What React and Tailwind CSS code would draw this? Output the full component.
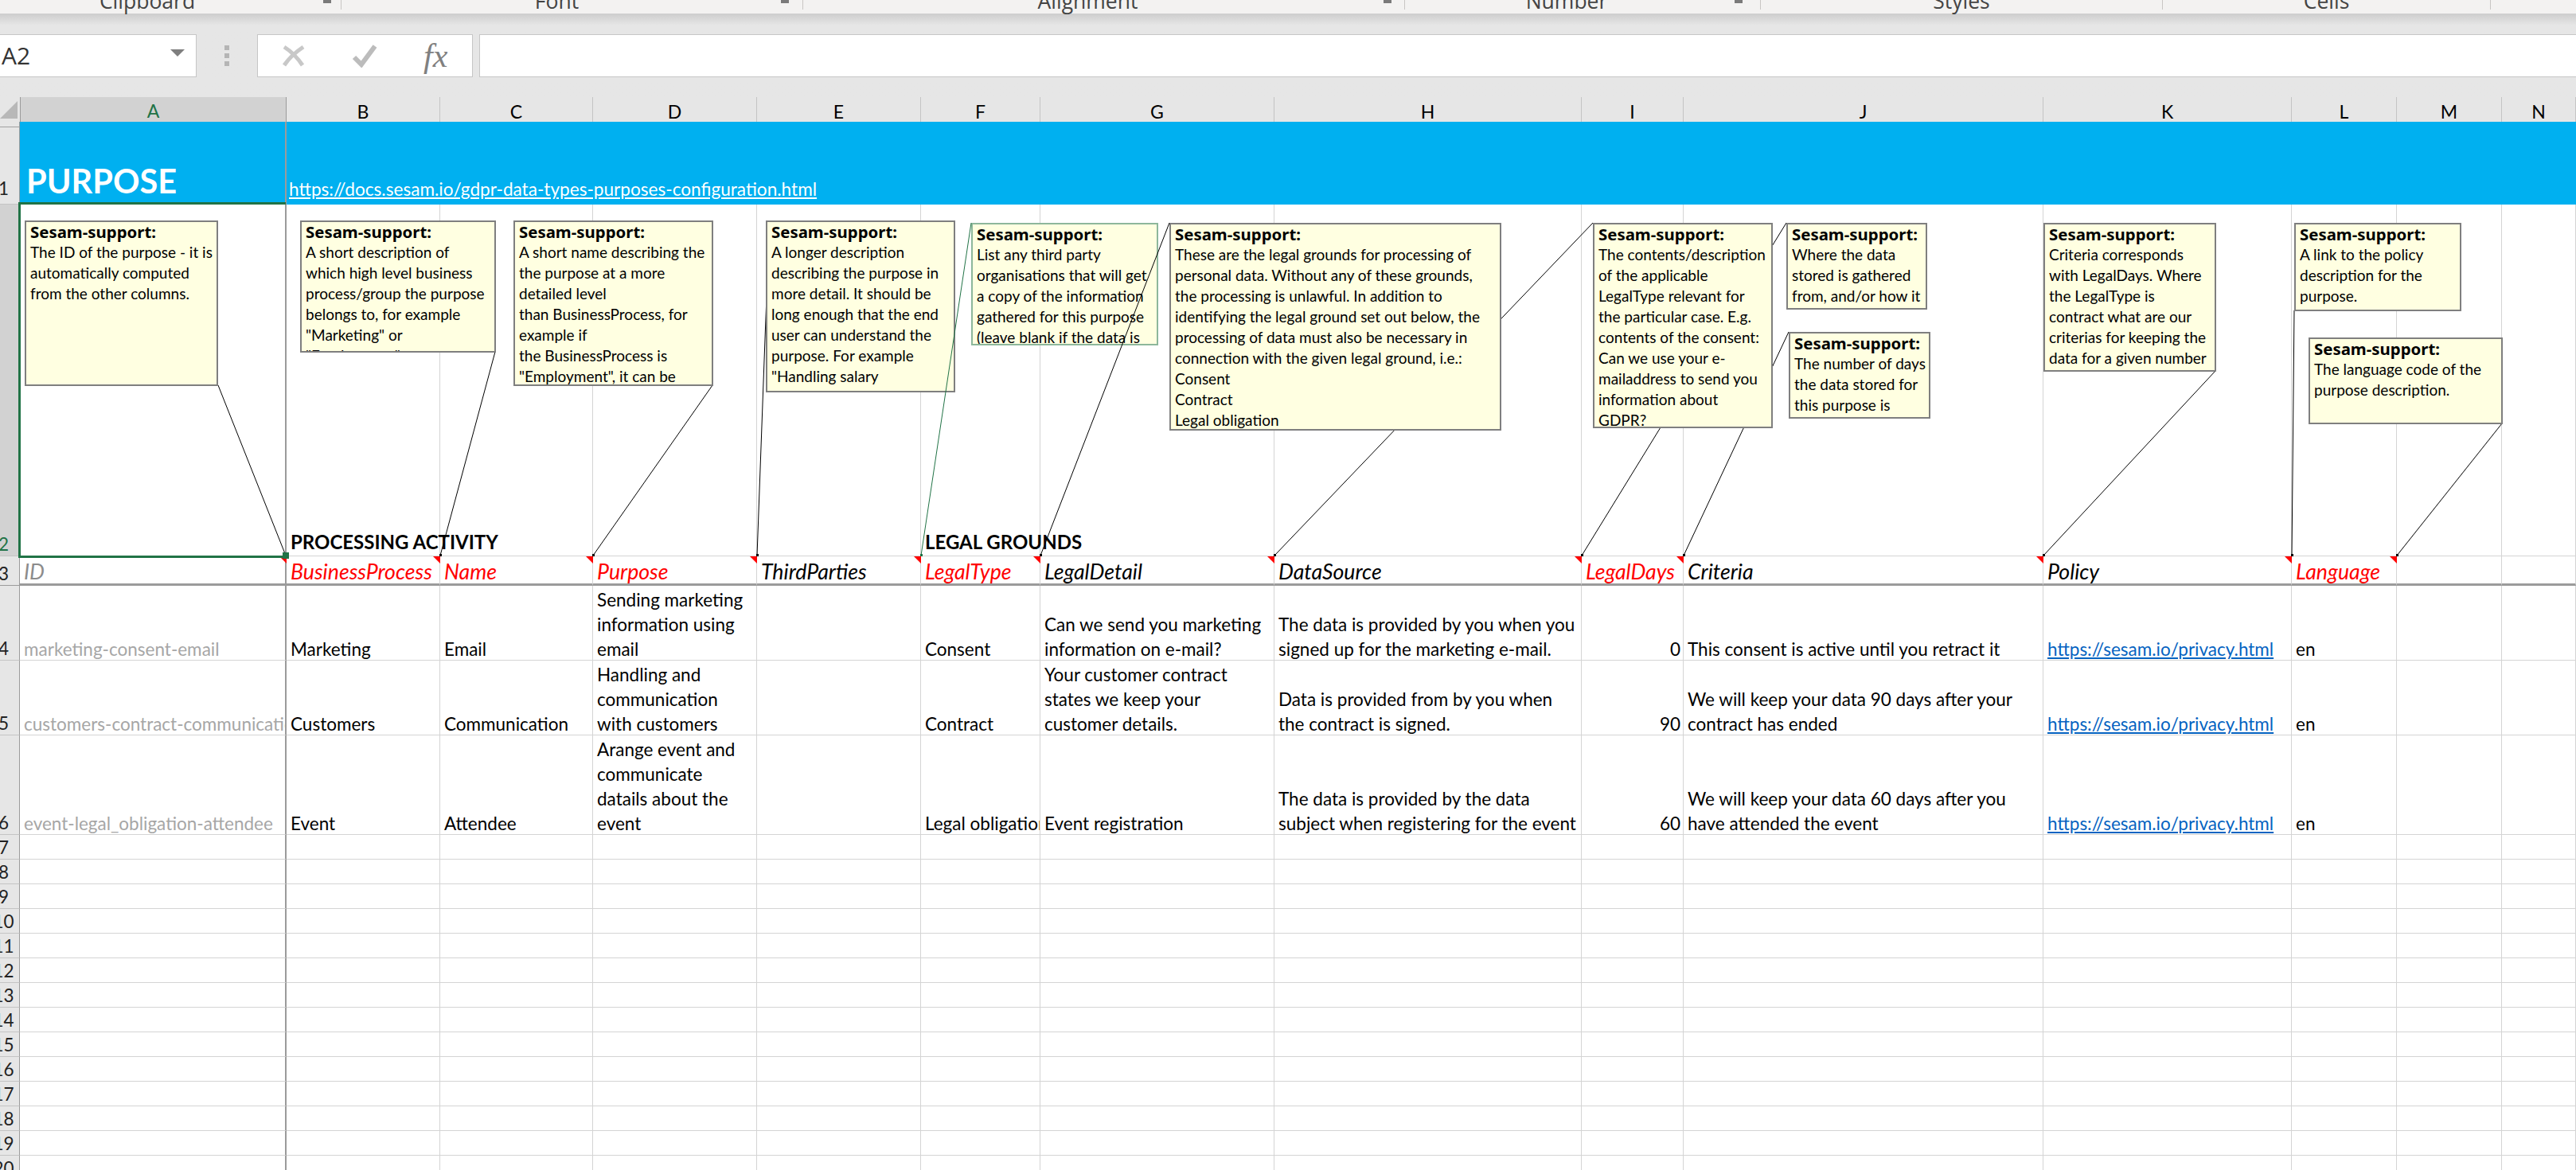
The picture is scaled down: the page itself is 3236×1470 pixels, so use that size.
const COLS = "grid grid-cols-[25px_335px_193px_192px_206px_206px_150px_294px_386px_128px_452px_312px_132px_132px_93px]";
const LETTERS = ["A","B","C","D","E","F","G","H","I","J","K","L","M","N"];

const GROUPS = [
  { label: "Clipboard", box: "w-[429px] pr-[58px]", launcher: "right-[12px]" },
  { label: "Font", box: "w-[580px] pr-[38px]", launcher: "right-[17px]" },
  { label: "Alignment", box: "w-[756px] pr-[40px]", launcher: "right-[16px]" },
  { label: "Number", box: "w-[447px] pr-[40px]", launcher: "right-[22px]" },
  { label: "Styles", box: "w-[505px]" },
  { label: "Cells", box: "w-[412px]" },
];

const NOTES = [
  { pos: "left-[31px] top-[277px] w-[243px] h-[208px]", lines: ["The ID of the purpose - it is","automatically computed","from the other columns."] },
  { pos: "left-[377px] top-[277px] w-[246px] h-[166px]", lines: ["A short description of","which high level business","process/group the purpose","belongs to, for example","\"Marketing\" or","\"Employment\""] },
  { pos: "left-[645px] top-[277px] w-[251px] h-[208px]", lines: ["A short name describing the","the purpose at a more","detailed level","than BusinessProcess, for","example if","the BusinessProcess is","\"Employment\", it can be"] },
  { pos: "left-[962px] top-[277px] w-[238px] h-[216px]", lines: ["A longer description","describing the purpose in","more detail. It should be","long enough that the end","user can understand the","purpose. For example","\"Handling salary","payments for"] },
  { pos: "left-[1220px] top-[280px] w-[235px] h-[154px]", tone: "border-[#8db79b]", lines: ["List any third party","organisations that will get","a copy of the information","gathered for this purpose","(leave blank if the data is"] },
  { pos: "left-[1469px] top-[280px] w-[417px] h-[261px]", lines: ["These are the legal grounds for processing of","personal data. Without any of these grounds,","the processing is unlawful. In addition to","identifying the legal ground set out below, the","processing of data must also be necessary in","connection with the given legal ground, i.e.:","Consent","Contract","Legal obligation"] },
  { pos: "left-[2001px] top-[280px] w-[226px] h-[258px]", lines: ["The contents/description","of the applicable","LegalType relevant for","the particular case. E.g.","contents of the consent:","Can we use your e-","mailaddress to send you","information about","GDPR?"] },
  { pos: "left-[2244px] top-[280px] w-[177px] h-[109px]", lines: ["Where the data","stored is gathered","from, and/or how it"] },
  { pos: "left-[2247px] top-[417px] w-[178px] h-[109px]", lines: ["The number of days","the data stored for","this purpose is"] },
  { pos: "left-[2567px] top-[280px] w-[217px] h-[187px]", lines: ["Criteria corresponds","with LegalDays. Where","the LegalType is","contract what are our","criterias for keeping the","data for a given number"] },
  { pos: "left-[2882px] top-[280px] w-[210px] h-[111px]", lines: ["A link to the policy","description for the","purpose."] },
  { pos: "left-[2900px] top-[424px] w-[244px] h-[109px]", lines: ["The language code of the","purpose description."] },
];

const BACK_LINES = [
  [274,484,359,698],[622,442,553,698],[895,484,745,698],[962.5,385,951,698],
  [2001,280,1601,698],[2244,280,1987,698],[2247,417,2115,698],
  [2783,466,2567,698],[2882,390,2879,698],[3143,532,3011,698],
];
const FRONT_LINES = [
  { p: [1220,280,1157,698], c: "#217346" },
  { p: [1469,280,1307,698], c: "#000000" },
];
const FLAGS = [360,553,745,951,1157,1307,1601,1987,2115,2567,2879,3011];

function RowHead({ n, active, last, pad = "pb-0" }) {
  return (
    <div className={`flex items-end border-r border-b ${pad} ${last ? "border-b-[#9b9b9b]" : "border-b-[#c4c4c4]"} border-r-[#9b9b9b] ${active ? "bg-[#d2d2d2] text-[#217346]" : "bg-[#e6e6e6] text-[#222222]"}`}>
      <span className="-mb-[1px] flex w-[9px] justify-center whitespace-nowrap text-[22.5px] leading-[30px]">{n}</span>
    </div>
  );
}

function Cell({ children, first, right, visible, size = "text-[22.5px]", tone = "text-black", line = "border-b-[#d4d4d4]", shift = "-mb-[2px]", className = "" }) {
  return (
    <div className={`flex min-w-0 flex-col justify-end border-b ${line} ${first ? "border-r-2 border-r-[#9b9b9b]" : "border-r border-r-[#d4d4d4]"} whitespace-nowrap px-[5px] leading-[31px] ${size} ${right ? "items-end pr-[3px]" : "items-start"} ${visible ? "overflow-visible" : "overflow-hidden"} ${tone} ${className}`}>
      {children != null && <div className={shift}>{children}</div>}
    </div>
  );
}

function HeadCell({ children, first, red, tone }) {
  return (
    <Cell first={first} size="text-[26.7px]" line="border-b-[3px] border-b-[#9b9b9b]" tone={tone || (red ? "text-[#ff0000]" : "text-black")} className="pb-[1px] italic">
      {children}
    </Cell>
  );
}

function Lines({ items }) {
  return items.map((t) => <div key={t}>{t}</div>);
}

function Link({ children }) {
  return <span className="text-[#0563c1] underline underline-offset-[2px]">{children}</span>;
}

function DataRow({ n, h, id, bp, name, purpose, type, detail, source, days, criteria }) {
  return (
    <div className={`${COLS} ${h}`}>
      <RowHead n={n} />
      <Cell first tone="text-[#a6a6a6]">{id}</Cell>
      <Cell>{bp}</Cell>
      <Cell>{name}</Cell>
      <Cell><Lines items={purpose} /></Cell>
      <Cell />
      <Cell>{type}</Cell>
      <Cell><Lines items={detail} /></Cell>
      <Cell><Lines items={source} /></Cell>
      <Cell right>{days}</Cell>
      <Cell><Lines items={criteria} /></Cell>
      <Cell><Link>https://sesam.io/privacy.html</Link></Cell>
      <Cell>en</Cell>
      <Cell />
      <Cell />
    </div>
  );
}

function EmptyRow({ n }) {
  return (
    <div className={`${COLS} h-[31px] shrink-0`}>
      <RowHead n={n} />
      <Cell first />
      {Array.from({ length: 13 }, (_, i) => <Cell key={i} />)}
    </div>
  );
}

function Note({ pos, tone = "border-[#7f7f7f]", lines }) {
  return (
    <div className={`absolute ${pos} overflow-hidden border-2 ${tone} bg-[#ffffe1] px-[5px] whitespace-nowrap text-black`}>
      <div className="-mt-[1px] text-[20.4px] font-bold leading-[26px] [font-family:'Noto_Sans',sans-serif]">Sesam-support:</div>
      {lines.map((t) => <div key={t} className="text-[19px] leading-[26px]">{t}</div>)}
    </div>
  );
}

function Connector({ p, c = "#000000" }) {
  return (
    <g>
      <line x1={p[0]} y1={p[1]} x2={p[2]} y2={p[3]} stroke={c} strokeWidth="1" />
      <rect x={p[2] - 1} y={p[3] - 2} width="3" height="3" fill={c} />
    </g>
  );
}

export default function App() {
  return (
    <div className="relative flex h-[1470px] w-[3236px] flex-col overflow-hidden bg-white text-black [font-family:Lato,sans-serif]">
      {/* ribbon remainder */}
      <div className="flex h-[17px] shrink-0 bg-[#f3f2f1]">
        {GROUPS.map((g) => (
          <div key={g.label} className={`relative flex h-[12px] justify-center overflow-visible border-r border-[#c8c6c4] ${g.box}`}>
            <span className="-mt-[15px] whitespace-nowrap text-[26.5px] leading-[33px] text-[#444444] [font-family:'Open_Sans',sans-serif]">{g.label}</span>
            {g.launcher && <span className={`absolute top-0 h-[4px] w-[10px] bg-[#7a7a7a] ${g.launcher}`} />}
          </div>
        ))}
      </div>

      {/* formula bar */}
      <div className="flex h-[105px] shrink-0 items-start bg-gradient-to-b from-[#cdcdcd] from-0% to-[#e6e6e6] to-[14%] pt-[26px]">
        <div className="flex h-[54px] w-[247px] items-center justify-between border border-l-0 border-[#c6c6c6] bg-white pr-[14px] pl-[2px]">
          <span className="text-[30px] leading-none text-[#333333] [font-family:'Open_Sans',sans-serif]">A2</span>
          <svg width="18" height="9" viewBox="0 0 18 9" className="-mt-[7px]"><path d="M0 0H18L9 9Z" fill="#7f7f7f" /></svg>
        </div>
        <div className="flex w-[76px] flex-col items-center gap-[4px] pt-[14px]">
          <span className="h-[6px] w-[6px] bg-[#b5b5b5]" />
          <span className="h-[6px] w-[6px] bg-[#b5b5b5]" />
          <span className="h-[6px] w-[6px] bg-[#b5b5b5]" />
        </div>
        <div className="flex h-[54px] w-[271px] items-center gap-[58px] border border-[#c6c6c6] bg-white pl-[30px]">
          <svg width="30" height="28" viewBox="0 0 30 28"><path d="M3 3C11 8 20 17 26 26M27 3C18 9 9 17 3 26" fill="none" stroke="#c8c8c8" strokeWidth="5" /></svg>
          <svg width="32" height="30" viewBox="0 0 32 30"><path d="M3 17L12 26L29 3" fill="none" stroke="#bcbcbc" strokeWidth="6" /></svg>
          <span className="text-[42px] italic leading-none text-[#808080] [font-family:'Liberation_Serif',serif]">fx</span>
        </div>
        <div className="ml-[8px] h-[54px] flex-1 border border-r-0 border-[#c6c6c6] bg-white" />
      </div>

      {/* column headers */}
      <div className={`${COLS} h-[31px] shrink-0 bg-[#e6e6e6]`}>
        <div className="relative border-b border-[#a0a0a0]">
          <svg width="23" height="22" viewBox="0 0 23 22" className="absolute top-[5px] left-0"><path d="M22 0V22H0Z" fill="#b8b8b8" /></svg>
        </div>
        {LETTERS.map((l, i) => (
          <div key={l} className={i === 0
            ? "flex items-center justify-center border-x border-[#9b9b9b] border-b-[3px] border-b-[#217346] bg-[#d2d2d2] text-[23px] text-[#217346]"
            : "flex items-center justify-center border-r border-b border-r-[#c4c4c4] border-b-[#a0a0a0] text-[23px] text-black"}>{l}</div>
        ))}
      </div>

      {/* row 1 */}
      <div className={`${COLS} h-[104px] shrink-0 bg-[#00b0f0]`}>
        <RowHead n={1} pad="pb-[5px]" />
        <div className="flex items-end border-r-2 border-[#9b9b9b] px-[8px] pb-[4px] text-[41.5px] font-bold leading-[52px] text-white">PURPOSE</div>
        <div className="col-span-13 flex items-end whitespace-nowrap px-[3px] pb-[4px] text-[22.6px] leading-[31px] text-white">
          <span className="underline underline-offset-[2px]">https://docs.sesam.io/gdpr-data-types-purposes-configuration.html</span>
        </div>
      </div>

      {/* row 2 */}
      <div className={`${COLS} h-[442px] shrink-0`}>
        <RowHead n={2} active />
        <Cell first />
        <Cell visible size="text-[24px]" shift="mb-[2px]" className="font-bold">PROCESSING ACTIVITY</Cell>
        <Cell /><Cell /><Cell />
        <Cell visible size="text-[24px]" shift="mb-[2px]" className="font-bold">LEGAL GROUNDS</Cell>
        <Cell /><Cell /><Cell /><Cell /><Cell /><Cell /><Cell /><Cell />
      </div>

      {/* row 3 */}
      <div className={`${COLS} h-[37px] shrink-0`}>
        <RowHead n={3} last />
        <HeadCell first tone="text-[#8c8c8c]">ID</HeadCell>
        <HeadCell red>BusinessProcess</HeadCell>
        <HeadCell red>Name</HeadCell>
        <HeadCell red>Purpose</HeadCell>
        <HeadCell>ThirdParties</HeadCell>
        <HeadCell red>LegalType</HeadCell>
        <HeadCell>LegalDetail</HeadCell>
        <HeadCell>DataSource</HeadCell>
        <HeadCell red>LegalDays</HeadCell>
        <HeadCell>Criteria</HeadCell>
        <HeadCell>Policy</HeadCell>
        <HeadCell red>Language</HeadCell>
        <HeadCell />
        <HeadCell />
      </div>

      <DataRow n={4} h="h-[94px] shrink-0" id="marketing-consent-email" bp="Marketing" name="Email"
        purpose={["Sending marketing","information using","email"]} type="Consent"
        detail={["Can we send you marketing","information on e-mail?"]}
        source={["The data is provided by you when you","signed up for the marketing e-mail."]}
        days="0" criteria={["This consent is active until you retract it"]} />
      <DataRow n={5} h="h-[94px] shrink-0" id="customers-contract-communication" bp="Customers" name="Communication"
        purpose={["Handling and","communication","with customers"]} type="Contract"
        detail={["Your customer contract","states we keep your","customer details."]}
        source={["Data is provided from by you when","the contract is signed."]}
        days="90" criteria={["We will keep your data 90 days after your","contract has ended"]} />
      <DataRow n={6} h="h-[125px] shrink-0" id="event-legal_obligation-attendee" bp="Event" name="Attendee"
        purpose={["Arange event and","communicate","datails about the","event"]} type="Legal obligation"
        detail={["Event registration"]}
        source={["The data is provided by the data","subject when registering for the event"]}
        days="60" criteria={["We will keep your data 60 days after you","have attended the event"]} />

      {[7,8,9,10,11,12,13,14,15,16,17,18,19,20].map((n) => <EmptyRow key={n} n={n} />)}

      {/* comment layer */}
      <svg className="pointer-events-none absolute top-0 left-0" width="3236" height="1470" viewBox="0 0 3236 1470">
        {FLAGS.map((x) => <path key={x} d={`M${x - 9} 699H${x}V708Z`} fill="#ff0000" />)}
        {BACK_LINES.map((p) => <Connector key={p.join()} p={p} />)}
      </svg>
      {NOTES.map((n) => <Note key={n.pos} {...n} />)}
      <svg className="pointer-events-none absolute top-0 left-0" width="3236" height="1470" viewBox="0 0 3236 1470">
        {FRONT_LINES.map((l) => <Connector key={l.p.join()} p={l.p} c={l.c} />)}
      </svg>

      {/* selection of A2 */}
      <div className="pointer-events-none absolute top-[254px] left-[23px] h-[447px] w-[336px] border-y-[3px] border-l-[3px] border-[#217346]" />
      <div className="absolute top-[694px] left-[355px] h-[8px] w-[8px] bg-[#217346]" />
    </div>
  );
}
